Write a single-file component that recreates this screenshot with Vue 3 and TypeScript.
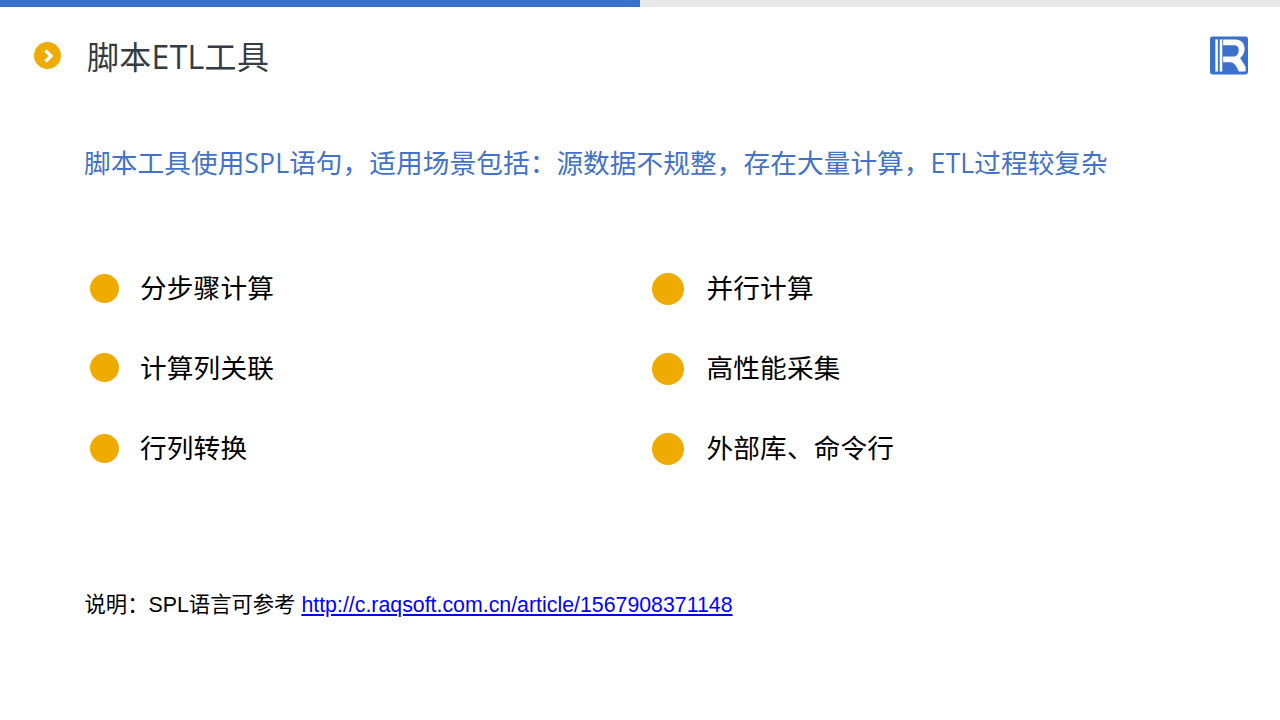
<script setup lang="ts">
const left: string[] = ['分步骤计算', '计算列关联', '行列转换']
const right: string[] = ['并行计算', '高性能采集', '外部库、命令行']
</script>

<template>
  <div class="slide">
    <div class="progress"><div class="progress-fill"></div></div>
    <header class="head">
      <svg class="chev" width="27" height="27" viewBox="0 0 27 27">
        <circle cx="13.5" cy="13.5" r="13.5" fill="#f0ab00" />
        <path d="M11.5 8.5 L17 14 L11.5 19.5" fill="none" stroke="#fff" stroke-width="3.4" />
      </svg>
      <h1 class="title">脚本ETL工具</h1>
      <svg class="logo" width="38" height="39" viewBox="0 0 39 39">
        <rect width="39" height="39" rx="2.5" fill="#3b70cc" />
        <rect x="5.5" y="3" width="2.6" height="33" fill="#fff" />
        <rect x="10" y="3" width="2.6" height="33" fill="#fff" />
        <path d="M13.5 3 H26 C32 3 35.5 7 35.5 12.5 C35.5 17 33.5 20 31 22 C33 25 35 28 36.5 31 V36 H29.5 C27.5 31 25 26.5 21 26.5 H13.5 V20.5 H24.5 C27.5 20.5 29.5 17 29.5 14 C29.5 10.5 27.5 9 24.5 9 H13.5 Z" fill="#fff" />
      </svg>
    </header>
    <p class="lead">脚本工具使用SPL语句，适用场景包括：源数据不规整，存在大量计算，ETL过程较复杂</p>
    <div class="cols">
      <ul class="list list-left">
        <li v-for="t in left" :key="t" class="item"><span class="dot dot-s"></span><span>{{ t }}</span></li>
      </ul>
      <ul class="list list-right">
        <li v-for="t in right" :key="t" class="item"><span class="dot dot-l"></span><span>{{ t }}</span></li>
      </ul>
    </div>
    <p class="note">说明：SPL语言可参考 <a href="#" class="link">http://c.raqsoft.com.cn/article/1567908371148</a></p>
  </div>
</template>

<style>
html, body { margin: 0; background: #fff; }
</style>

<style scoped>
.slide {
  width: 1280px;
  height: 720px;
  overflow: hidden;
  background: #fff;
  font-family: "Liberation Sans", "Noto Sans CJK SC", sans-serif;
}
.progress { height: 7px; background: #e9e9e9; }
.progress-fill { width: 640px; height: 100%; background: #3b70cc; }
.head {
  display: flex;
  align-items: center;
  height: 80px;
  margin-top: 9px;
  padding: 0 32px 0 34px;
  box-sizing: border-box;
}
.chev { flex: none; margin-bottom: 1px; }
.title {
  flex: 1;
  margin: 0 0 0 26px;
  padding-top: 2px;
  font-family: "Open Sans", "Noto Sans CJK SC", sans-serif;
  font-weight: 400;
  font-size: 32px;
  line-height: 44px;
  letter-spacing: 0.3px;
  color: #333c42;
}
.logo { flex: none; margin-bottom: 1px; }
.lead {
  margin: 48px 0 0 84px;
  font-family: "Open Sans", "Noto Sans CJK SC", sans-serif;
  font-size: 26.67px;
  line-height: 38px;
  letter-spacing: 0.07px;
  color: #4472c4;
  white-space: nowrap;
}
.cols { display: flex; margin-top: 87px; }
.list {
  list-style: none;
  margin: 0;
  padding: 0;
  display: flex;
  flex-direction: column;
  gap: 40px;
  font-size: 26.67px;
  line-height: 40px;
  letter-spacing: 0.15px;
  color: #000;
}
.list-left { width: 562px; margin-left: 90px; }
.item { display: flex; align-items: center; }
.dot { flex: none; border-radius: 50%; background: #f0ab00; }
.dot-s { width: 29px; height: 29px; margin-right: 21px; margin-bottom: 1px; }
.item:nth-child(2) .dot-s { margin-bottom: 3px; }
.dot-l { width: 32px; height: 32px; margin-right: 22.5px; }
.note {
  margin: 121px 0 0 84.5px;
  font-size: 21.33px;
  line-height: 30px;
  color: #000;
}
.link { color: #0000ff; text-decoration: underline; }
</style>
